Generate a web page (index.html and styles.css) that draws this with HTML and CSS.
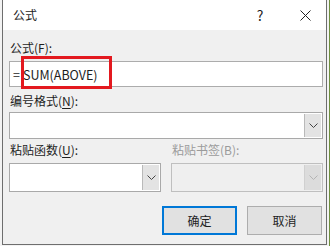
FILE: index.html
```html
<!DOCTYPE html>
<html lang="zh-CN">
<head>
    <meta charset="UTF-8">
    <title>公式</title>
    <link rel="stylesheet" href="styles.css">
</head>
<body>
    <div class="desk">
        <div class="dialog">
            <div class="titlebar">
                <span class="title">公式</span>
                <span class="help">?</span>
                <svg class="close" width="11" height="11" viewBox="0 0 11 11">
                    <path d="M0.5 0.5 L10.5 10.5 M10.5 0.5 L0.5 10.5" stroke="#222" stroke-width="1" fill="none"/>
                </svg>
            </div>

            <div class="content">
                <div class="label">公式(F):</div>
                <div class="field formula">
                    <span class="eq">=</span><span>SUM(ABOVE)</span>
                    <div class="highlight"></div>
                </div>

                <div class="label gap-s">编号格式(<u>N</u>):</div>
                <div class="combo wide">
                    <div class="combo-text"></div>
                    <div class="combo-btn">
                        <svg width="9" height="5" viewBox="0 0 9 5"><path d="M0.5 0.5 L4.5 4.5 L8.5 0.5" stroke="#444" fill="none"/></svg>
                    </div>
                </div>

                <div class="row labels">
                    <div class="label col">粘贴函数(<u>U</u>):</div>
                    <div class="label col disabled">粘贴书签(B):</div>
                </div>
                <div class="row">
                    <div class="combo col">
                        <div class="combo-text"></div>
                        <div class="combo-btn">
                            <svg width="9" height="5" viewBox="0 0 9 5"><path d="M0.5 0.5 L4.5 4.5 L8.5 0.5" stroke="#444" fill="none"/></svg>
                        </div>
                    </div>
                    <div class="combo col off">
                        <div class="combo-text"></div>
                        <div class="combo-btn">
                            <svg width="9" height="5" viewBox="0 0 9 5"><path d="M0.5 0.5 L4.5 4.5 L8.5 0.5" stroke="#b4b4b4" fill="none"/></svg>
                        </div>
                    </div>
                </div>

                <div class="actions">
                    <button class="btn primary">确定</button>
                    <button class="btn">取消</button>
                </div>
            </div>
        </div>
    </div>
</body>
</html>
```

FILE: styles.css
```css
body {
    margin: 0;
    font-family: "Noto Sans CJK SC", "Noto Sans", sans-serif;
    font-size: 12px;
    color: #1e1e1e;
}
.desk {
    width: 330px;
    height: 246px;
    box-sizing: border-box;
    padding-left: 2px;
    background-color: #f3f3f3;
    border-right: 1px solid #6f8f3f;
    overflow: hidden;
}
.dialog {
    width: 325px;
    height: 245px;
    box-sizing: border-box;
    border: 1px solid #6e6e6e;
    border-top: none;
    background-color: #f0f0f0;
}
.titlebar {
    height: 30px;
    background-color: #fff;
    display: flex;
    align-items: center;
    padding-left: 10px;
}
.title {
    flex: 1;
    line-height: 16px;
}
.help {
    width: 12px;
    font-size: 14px;
    margin-right: 34px;
    text-align: center;
}
.close {
    margin-right: 15px;
}
.content {
    padding: 10px 3px 0 6px;
}
.label {
    height: 16px;
    line-height: 16px;
    margin-bottom: 5px;
    padding-left: 1px;
}
.label u {
    text-decoration-thickness: 1px;
    text-underline-offset: 2px;
}
.gap-s {
    margin-top: 6px;
    margin-bottom: 3px;
}
.field {
    position: relative;
    height: 26px;
    box-sizing: border-box;
    border: 1px solid #acacac;
    background-color: #fff;
    display: flex;
    align-items: center;
    padding-left: 3px;
    font-size: 12.5px;
}
.eq {
    margin-right: 3px;
}
.highlight {
    position: absolute;
    left: 11px;
    top: -6px;
    width: 91px;
    height: 33px;
    box-sizing: border-box;
    border: 3px solid #e3191f;
}
.combo {
    display: flex;
    box-sizing: border-box;
    border: 1px solid #a9a9a9;
    background-color: #fff;
}
.combo.wide {
    height: 27px;
}
.combo-text {
    flex: 1;
}
.combo-btn {
    width: 16px;
    margin: 1px;
    background-color: #e3e3e3;
    border-left: 1px solid #b9b9b9;
    display: flex;
    align-items: center;
    justify-content: center;
}
.row {
    display: flex;
    gap: 10px;
}
.row .col {
    width: 152px;
}
.labels {
    margin-top: 3px;
}
.labels .label {
    margin-bottom: 5px;
}
.label.disabled {
    color: #9b9b9b;
}
.row .combo {
    height: 29px;
}
.combo.off {
    background-color: #efefef;
    border-color: #bfbfbf;
}
.combo.off .combo-btn {
    background-color: #dcdcdc;
    border-left-color: #d0d0d0;
}
.actions {
    display: flex;
    justify-content: flex-end;
    gap: 10px;
    margin-top: 14px;
    padding-right: 1px;
}
.btn {
    width: 75px;
    height: 29px;
    box-sizing: border-box;
    font-family: inherit;
    font-size: 12px;
    color: #1e1e1e;
    background-color: #e1e1e1;
    border: 1px solid #adadad;
    padding: 0;
}
.btn.primary {
    border: 2px solid #0078d7;
}
```
